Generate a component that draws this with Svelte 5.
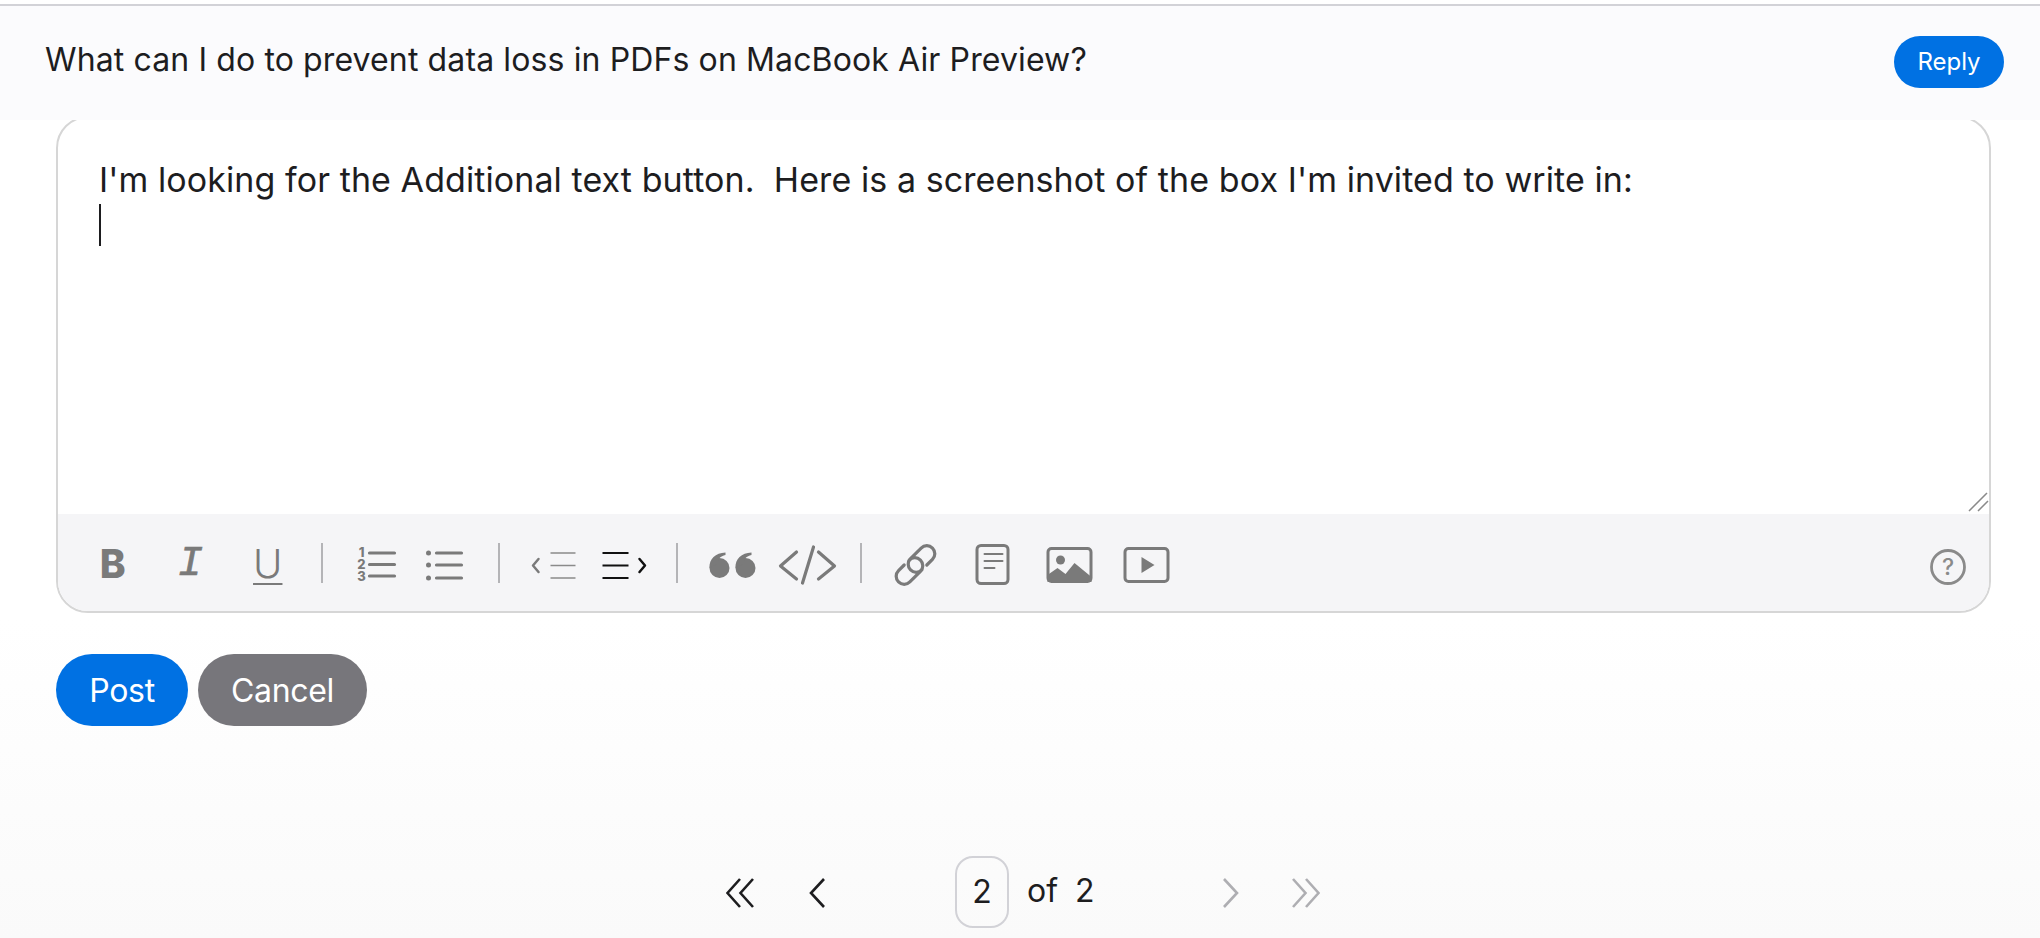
<script>
  const font = "Inter, 'Liberation Sans', sans-serif";
</script>

<div class="page">
  <div class="topline"></div>
  <header class="bar">
    <h1>What can I do to prevent data loss in PDFs on MacBook Air Preview?</h1>
    <button class="reply">Reply</button>
  </header>

  <section class="editor">
    <div class="area">
      <p>I'm looking for the Additional text button.&nbsp; Here is a screenshot of the box I'm invited to write in:</p>
      <span class="caret"></span>
      <svg class="grip" width="24" height="24" viewBox="0 0 24 24"><path d="M4 21 22 3M13 21 23 11" /></svg>
    </div>
    <div class="toolbar">
      <div class="group g1">
        <span class="tb b">B</span>
        <span class="tb i">I</span>
        <span class="tb u">U</span>
      </div>
      <span class="sep s1"></span>
      <div class="group g2">
        <svg class="ic" viewBox="0 0 60 48"><g class="thick"><path d="M23 13H48M23 24.500H48M23 36H48" /></g><text x="15" y="17" font-family={font}>1</text><text x="15" y="29" font-family={font}>2</text><text x="15" y="41" font-family={font}>3</text></svg>
        <svg class="ic" viewBox="0 0 60 48"><g class="thick"><path d="M21 13H46M21 25H46M21 38H46" /></g><circle cx="13" cy="13" r="2.500" /><circle cx="13" cy="25" r="2.500" /><circle cx="13" cy="38" r="2.500" /></svg>
      </div>
      <span class="sep s2"></span>
      <div class="group g3">
        <svg class="ic" viewBox="0 0 60 48"><path class="thin" d="M27 13H52M27 25.500H52M27 38H52" /><path class="chev" d="M15 19 9.500 25.500 15 32" /></svg>
        <svg class="ic dark" viewBox="0 0 60 48"><path class="thin" d="M8 13H34M8 25.500H34M8 38H34" /><path class="chev" d="M45 19 50.500 25.500 45 32" /></svg>
      </div>
      <span class="sep s3"></span>
      <div class="group g4">
        <svg class="ic" viewBox="0 0 60 48"><circle cx="17" cy="28" r="10" /><circle cx="43" cy="28" r="10" /><path d="M7 28C6.500 19 13 13 23 12.500V15C18 16 15 19 14.500 24Z" /><path d="M33 28C32.500 19 39 13 49 12.500V15C44 16 41 19 40.500 24Z" /></svg>
        <svg class="ic" viewBox="0 0 60 48"><g class="thick"><path d="M19 12 3 26 19 39M36 7 25 43M41 12 57 26 41 39" /></g></svg>
      </div>
      <span class="sep s4"></span>
      <div class="group g5">
        <svg class="ic" viewBox="0 0 60 48"><g transform="translate(30 25) rotate(-45)" class="thick"><path d="M8 8H16A8 8 0 0 0 16 -8H1A8 8 0 0 0 1 8" /><path d="M-8 -8H-16A8 8 0 0 0 -16 8H-1A8 8 0 0 0 -1 -8" /></g></svg>
        <svg class="ic" viewBox="0 0 60 48"><rect class="box" x="14.500" y="5.500" width="31" height="38" rx="4" /><path class="thin2" d="M22 14H40M22 21H40M22 28H32" /></svg>
        <svg class="ic" viewBox="0 0 60 48"><rect class="box" x="8.500" y="8.500" width="43" height="33" rx="3.500" /><circle cx="21" cy="20" r="4.500" /><path d="M8 35 18 28 26 34 35 23 52 37V42H8Z" /></svg>
        <svg class="ic" viewBox="0 0 60 48"><rect class="box" x="8.500" y="8.500" width="43" height="33" rx="3.500" /><path d="M25 17 38 25 25 33Z" /></svg>
      </div>
      <svg class="ic help" viewBox="0 0 60 48"><circle class="ring" cx="30" cy="27" r="16.500" /><text class="q" x="30" y="35" font-family={font}>?</text></svg>
    </div>
  </section>

  <div class="actions">
    <button class="post">Post</button>
    <button class="cancel">Cancel</button>
  </div>

  <nav class="pager">
    <svg class="pg first" width="28" height="30" viewBox="0 0 28 30"><path d="M14 1 1.500 15 14 29M27 1 14.500 15 27 29" /></svg>
    <svg class="pg prev" width="16" height="30" viewBox="0 0 16 30"><path d="M15 1 2 15 15 29" /></svg>
    <span class="current">2</span>
    <span class="of">of</span>
    <span class="total">2</span>
    <svg class="pg off next" width="17" height="30" viewBox="0 0 17 30"><path d="M2 1 15 15 2 29" /></svg>
    <svg class="pg off last" width="28" height="30" viewBox="0 0 28 30"><path d="M1 1 13.500 15 1 29M14 1 26.500 15 14 29" /></svg>
  </nav>
</div>

<style>
  :global(body) {
    margin: 0;
    background: #fff;
  }
  .page {
    width: 2040px;
    height: 938px;
    overflow: hidden;
    font-family: Inter, "Liberation Sans", sans-serif;
    color: #1d1d1f;
    background: linear-gradient(180deg, #fff 0, #fff 620px, #fafafa 938px);
  }
  .topline {
    height: 2px;
    margin-top: 4px;
    background: #d2d2d7;
  }
  .bar {
    position: relative;
    z-index: 1;
    height: 114px;
    padding: 0 36px 0 45px;
    display: flex;
    align-items: center;
    justify-content: space-between;
    background: #fbfbfd;
  }
  h1 {
    margin: 0 0 7px;
    font-size: 32px;
    line-height: 40px;
    font-weight: 400;
    letter-spacing: 0.12px;
    white-space: nowrap;
  }
  button {
    border: 0;
    color: #fff;
    font-family: inherit;
    padding: 0;
  }
  .reply {
    width: 110px;
    height: 52px;
    border-radius: 26px;
    background: #0071e3;
    font-size: 24px;
    padding-bottom: 2px;
    margin-bottom: 2px;
  }
  .editor {
    margin: -4px 49px 0 56px;
    border: 2px solid #d6d6d6;
    border-radius: 32px;
    overflow: hidden;
    background: #fff;
  }
  .area {
    position: relative;
    height: 396px;
    padding: 40px 0 0 41px;
    box-sizing: border-box;
  }
  p {
    margin: 0;
    height: 46px;
    line-height: 44px;
    font-size: 34px;
    letter-spacing: 0.08px;
    white-space: nowrap;
  }
  .caret {
    display: block;
    width: 2px;
    height: 42px;
    background: #1d1d1f;
  }
  .grip {
    position: absolute;
    right: 0;
    bottom: 0;
    fill: none;
    stroke: #8a8a8a;
    stroke-width: 1.5;
  }
  .toolbar {
    height: 97px;
    box-sizing: border-box;
    padding: 26px 11px 0 16px;
    display: flex;
    align-items: flex-start;
    background: #f5f5f7;
  }
  .group {
    display: flex;
  }
  .group > * {
    flex: 1 1 0;
    min-width: 0;
    height: 48px;
  }
  .g1 { width: 232.5px; }
  .g2 { width: 138px; }
  .g3 { width: 142px; }
  .g4 { width: 150px; }
  .g5 { width: 308px; }
  .sep {
    width: 2px;
    height: 40px;
    margin-top: 3px;
    background: #b4b4b7;
  }
  .s1 { margin-left: 14.5px; margin-right: 18.5px; }
  .s2 { margin-left: 18.5px; margin-right: 17.5px; }
  .s3 { margin-left: 16.5px; margin-right: 16.5px; }
  .s4 { margin-left: 15.5px; margin-right: 14.5px; }
  .tb {
    display: block;
    text-align: center;
    color: #7a7a7a;
    line-height: 48px;
  }
  .b {
    font-size: 39px;
    font-weight: 800;
  }
  .i {
    font-family: "Liberation Mono", monospace;
    font-style: italic;
    font-size: 42px;
    -webkit-text-stroke: 0.7px #7a7a7a;
  }
  .u {
    font-size: 40px;
    font-weight: 300;
    text-decoration: underline;
    text-decoration-thickness: 2px;
    text-underline-offset: 5px;
  }
  .ic {
    display: block;
    height: 48px;
    overflow: visible;
    fill: #7a7a7a;
  }
  .group > .ic {
    width: 100%;
  }
  .thick path {
    fill: none;
    stroke: #7a7a7a;
    stroke-width: 3.2;
    stroke-linecap: round;
    stroke-linejoin: round;
  }
  .ic text {
    font-size: 13px;
    font-weight: 800;
    text-anchor: middle;
  }
  .thin {
    fill: none;
    stroke: #8a8a8a;
    stroke-width: 1.700;
  }
  .thin2 {
    fill: none;
    stroke: #7a7a7a;
    stroke-width: 2;
    stroke-linecap: round;
  }
  .chev {
    fill: none;
    stroke: #7a7a7a;
    stroke-width: 2.500;
    stroke-linecap: round;
    stroke-linejoin: round;
  }
  .dark .thin {
    stroke: #111;
    stroke-width: 2.200;
  }
  .dark .chev {
    stroke: #111;
  }
  .box,
  .ring {
    fill: none;
    stroke: #7a7a7a;
    stroke-width: 3;
  }
  .help {
    width: 60px;
    margin-left: auto;
  }
  .ring {
    stroke: #8a8a8a;
    stroke-width: 2.800;
  }
  .ic .q {
    font-size: 23px;
    font-weight: 500;
    fill: #8a8a8a;
  }
  .actions {
    display: flex;
    gap: 10px;
    margin: 41px 0 0 56px;
  }
  .post,
  .cancel {
    height: 72px;
    border-radius: 36px;
    font-size: 32px;
    letter-spacing: -0.3px;
  }
  .post {
    width: 132px;
    background: #0071e3;
  }
  .cancel {
    width: 169px;
    background: #77767b;
  }
  .pager {
    display: flex;
    align-items: flex-start;
    margin-top: 130px;
    padding-left: 726px;
    font-size: 32px;
  }
  .pg {
    margin-top: 22px;
    fill: none;
    stroke: #1d1d1f;
    stroke-width: 2.600;
  }
  .off {
    stroke: #aeaeb2;
  }
  .prev { margin-left: 55px; }
  .next { margin-left: 127px; }
  .last { margin-left: 53px; }
  .current {
    width: 54px;
    height: 72px;
    margin-left: 130px;
    box-sizing: border-box;
    border: 2px solid #d2d2d7;
    border-radius: 18px;
    text-align: center;
    line-height: 68px;
  }
  .of {
    margin-left: 18px;
    line-height: 70px;
  }
  .total {
    margin-left: 17px;
    line-height: 70px;
  }
</style>
